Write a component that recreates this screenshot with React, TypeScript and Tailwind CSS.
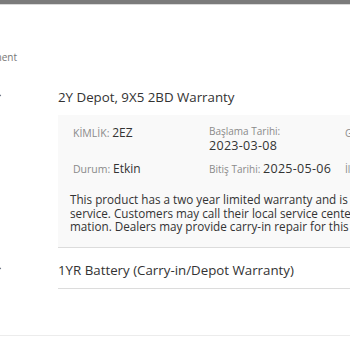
import { ChevronDown } from "lucide-react";

const font = { fontFamily: '"Open Sans", "Liberation Sans", sans-serif' };

function WarrantyRow(props: { title: string; children?: React.ReactNode }) {
  return (
    <div className="flex">
      <div className="w-[58px] shrink-0 relative">
        <ChevronDown className="absolute left-[-10px] top-[15px] w-3.5 h-3.5 text-gray-500" strokeWidth={2} />
      </div>
      <div className="flex-1 border-b border-[#dcdcdc]">
        <div className="h-[40px] pt-[5px] flex items-center text-[13.3px] text-[#333] whitespace-nowrap">{props.title}</div>
        {props.children}
      </div>
    </div>
  );
}

export default function App() {
  return (
    <div className="w-[350px] h-[350px] overflow-hidden bg-white" style={font}>
      <div className="h-[4px] bg-[#7b7b7b]" />
      <div className="h-px bg-[#d9d9d9]" />
      <div className="h-[46px]" />
      <div className="text-[10px] text-[#777] leading-[12px] ml-[-37px] whitespace-nowrap">Entitlement</div>
      <div className="h-[12px]" />
      <div className="w-[600px]">
        <WarrantyRow title="2Y Depot, 9X5 2BD Warranty">
          <div className="bg-[#f9f9f9] h-[132px] pl-[15px] pt-[9px]">
            <div className="grid grid-cols-[136px_136px_136px] text-[10.5px] text-[#8a8a8a] whitespace-nowrap">
              <div className="h-[36px] leading-[18px]">
                KİMLİK: <span className="text-[#333] text-[12px]">2EZ</span>
              </div>
              <div className="h-[36px] leading-[14px]">
                <div className="text-[10px]">Başlama Tarihi:</div>
                <div className="text-[12.5px] leading-[16px] text-[#333] tracking-[0.3px]">2023-03-08</div>
              </div>
              <div className="h-[36px] leading-[18px] text-[10px]">Gönderim Tarihi:</div>
              <div className="h-[18px] leading-[18px]">
                Durum: <span className="text-[#333] text-[12px]">Etkin</span>
              </div>
              <div className="h-[18px] leading-[18px]">
                <span className="text-[10px]">Bitiş Tarihi: </span>
                <span className="text-[12.5px] text-[#333] tracking-[0.3px]">2025-05-06</span>
              </div>
              <div className="h-[18px] leading-[18px] text-[10px]">İlave Bilgi</div>
            </div>
            <p className="mt-[15px] ml-[-3px] text-[11.7px] leading-[13.5px] text-[#333] whitespace-nowrap">
              This product has a two year limited warranty and is supported by depot repair
              <br />
              service. Customers may call their local service center for additional infor-
              <br />
              mation. Dealers may provide carry-in repair for this product.
            </p>
          </div>
        </WarrantyRow>
        <WarrantyRow title="1YR Battery (Carry-in/Depot Warranty)" />
      </div>
      <div className="h-[46px]" />
      <div className="h-px bg-[#ececec]" />
    </div>
  );
}
